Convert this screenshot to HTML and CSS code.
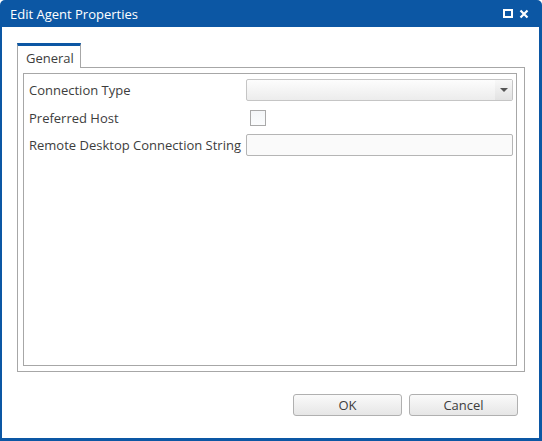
FILE: index.html
```html
<!DOCTYPE html>
<html lang="en">
<head>
    <meta charset="UTF-8">
    <title>Edit Agent Properties</title>
    <link rel="stylesheet" href="styles.css">
</head>
<body>
    <div class="window">
        <div class="titlebar">
            <span class="title">Edit Agent Properties</span>
            <div class="controls">
                <span class="maximize"></span>
                <svg class="close" width="10" height="10" viewBox="0 0 10 10">
                    <path d="M1.5 1.5 L8.5 8.5 M8.5 1.5 L1.5 8.5" stroke="#fff" stroke-width="2.2" fill="none"/>
                </svg>
            </div>
        </div>
        <div class="content">
            <div class="tabs">
                <div class="tabstrip">
                    <div class="tab selected">General</div>
                    <div class="tab-rest"></div>
                </div>
                <div class="tab-body">
                    <div class="panel">
                        <div class="row">
                            <label>Connection Type</label>
                            <div class="combo">
                                <span class="combo-text"></span>
                                <span class="combo-arrow"></span>
                            </div>
                        </div>
                        <div class="row check-row">
                            <label>Preferred Host</label>
                            <span class="checkbox"></span>
                        </div>
                        <div class="row">
                            <label>Remote Desktop Connection String</label>
                            <input type="text" class="textbox">
                        </div>
                    </div>
                </div>
            </div>
            <div class="actions">
                <button class="btn">OK</button>
                <button class="btn">Cancel</button>
            </div>
        </div>
    </div>
</body>
</html>
```

FILE: styles.css
```css
* {
    margin: 0;
    padding: 0;
    box-sizing: border-box;
}

body {
    font-family: 'Open Sans', 'Noto Sans', sans-serif;
    font-size: 13px;
    color: #3d3d3d;
    background: #fff;
}

.window {
    width: 542px;
    height: 441px;
    background: #0c57a4;
    border-radius: 5px 5px 0 0;
    display: flex;
    flex-direction: column;
    padding: 0 3px 3px 2px;
}

.titlebar {
    height: 27px;
    display: flex;
    align-items: center;
    justify-content: space-between;
    padding: 0 10px 0 8px;
    color: #fff;
    font-size: 13px;
}

.controls {
    display: flex;
    align-items: center;
    gap: 6px;
}

.maximize {
    width: 10px;
    height: 9px;
    border: 2px solid #fff;
}

.close {
    display: block;
}

.content {
    flex: 1;
    background: #fff;
    display: flex;
    flex-direction: column;
    padding: 16px 14px 0 15px;
}

.tabs {
    display: flex;
    flex-direction: column;
    height: 329px;
}

.tabstrip {
    display: flex;
    height: 25px;
}

.tab {
    width: 64px;
    border: 1px solid #a7a7a7;
    border-top: 3px solid #0c57a4;
    border-bottom: none;
    padding: 3px 0 0 8px;
}

.tab-rest {
    flex: 1;
    border-bottom: 1px solid #a7a7a7;
}

.tab-body {
    flex: 1;
    border: 1px solid #a7a7a7;
    border-top: none;
    padding: 5px 7px 5px 5px;
}

.panel {
    height: 100%;
    border: 1px solid #a7a7a7;
    padding: 5px 3px 0 5px;
    display: flex;
    flex-direction: column;
    gap: 8px;
}

.row {
    display: flex;
    align-items: center;
    height: 22px;
}

.row label {
    width: 217px;
    flex-shrink: 0;
    white-space: nowrap;
}

.combo {
    flex: 1;
    height: 22px;
    border: 1px solid #c5c5c5;
    border-radius: 2px;
    background: linear-gradient(#fdfdfd, #ececec);
    display: flex;
    justify-content: flex-end;
}

.combo-arrow {
    width: 17px;
    display: flex;
    align-items: center;
    justify-content: center;
    background: linear-gradient(#f8f8f8, #e2e2e2);
}

.combo-arrow::before {
    content: '';
    border-left: 4px solid transparent;
    border-right: 4px solid transparent;
    border-top: 4px solid #555;
}

.check-row {
    height: 17px;
}

.checkbox {
    width: 16px;
    height: 16px;
    margin-left: 4px;
    border: 1px solid #a9a9a9;
    background: linear-gradient(#f4f6f8, #fbfcfd);
}

.textbox {
    flex: 1;
    height: 22px;
    border: 1px solid #b5b5b5;
    border-radius: 2px;
    background: #fafafa;
    outline: none;
}

.actions {
    display: flex;
    justify-content: flex-end;
    gap: 7px;
    padding: 22px 7px 0 0;
}

.btn {
    width: 109px;
    height: 22px;
    border: 1px solid #b0b0b0;
    border-radius: 3px;
    background: linear-gradient(#fafafa, #e6e6e6);
    font-family: inherit;
    font-size: 13px;
    color: #3d3d3d;
}
```
